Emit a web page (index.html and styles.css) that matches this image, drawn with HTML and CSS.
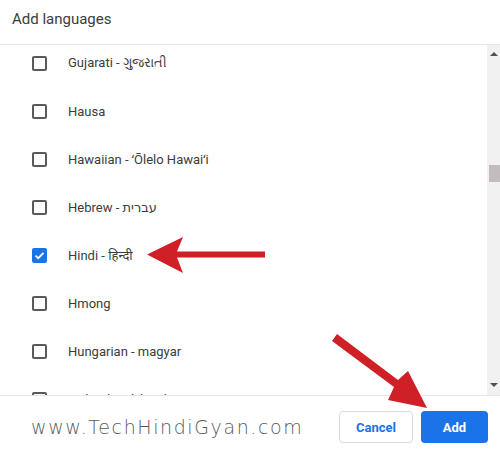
FILE: index.html
```html
<!DOCTYPE html>
<html>
<head>
<meta charset="utf-8">
<link rel="stylesheet" href="styles.css">
</head>
<body>
<div class="dialog">
  <div class="header">Add languages</div>
  <div class="body">
    <div class="list">
      <div class="rows">
        <div class="row"><span class="box"></span><span class="label">Gujarati - ગુજરાતી</span></div>
        <div class="row"><span class="box"></span><span class="label">Hausa</span></div>
        <div class="row"><span class="box"></span><span class="label">Hawaiian - ʻŌlelo Hawaiʻi</span></div>
        <div class="row"><span class="box"></span><span class="label">Hebrew - עברית</span></div>
        <div class="row"><span class="box checked"><svg viewBox="0 0 15 15" width="15" height="15"><path d="M3.5 7.6 L6.2 10.2 L11.5 4.9" fill="none" stroke="#fff" stroke-width="1.8"/></svg></span><span class="label">Hindi - हिन्दी</span></div>
        <div class="row"><span class="box"></span><span class="label">Hmong</span></div>
        <div class="row"><span class="box"></span><span class="label">Hungarian - magyar</span></div>
        <div class="row"><span class="box"></span><span class="label">Icelandic - íslenska</span></div>
      </div>
    </div>
    <div class="scrollbar">
      <div class="arrow up"></div>
      <div class="track"><div class="thumb"></div></div>
      <div class="arrow down"></div>
    </div>
  </div>
  <div class="footer">
    <div class="watermark">www.TechHindiGyan.com</div>
    <div class="buttons">
      <button class="btn cancel">Cancel</button>
      <button class="btn add">Add</button>
    </div>
  </div>
  <svg class="arrows" width="500" height="457" viewBox="0 0 500 457">
    <polygon fill="#cf1f27" points="147,254.5 183,237 177,251.5 265,251.5 265,257.5 177,257.5 183,273"/>
    <polygon fill="#cf1f27" points="337,334 398,380 408,371 427,408 388,400 394,387 332,341"/>
  </svg>
</div>
</body>
</html>
```
FILE: styles.css
```css
html, body {
  margin: 0;
  padding: 0;
  background: #fff;
}
.dialog {
  position: relative;
  width: 500px;
  height: 457px;
  display: flex;
  flex-direction: column;
  font-family: Roboto, "Noto Sans", "DejaVu Sans", sans-serif;
  overflow: hidden;
}
.header {
  height: 45px;
  box-sizing: border-box;
  padding: 10px 0 0 12px;
  font-size: 15px;
  color: #3c3c3c;
  border-bottom: 1px solid #e6e6e6;
}
.body {
  height: 350px;
  display: flex;
}
.list {
  flex: 1;
  overflow: hidden;
}
.rows {
  margin-top: -6px;
}
.row {
  height: 48px;
  display: flex;
  align-items: center;
  padding-left: 32px;
}
.box {
  width: 15px;
  height: 15px;
  box-sizing: border-box;
  border: 2px solid #5a5a5a;
  border-radius: 2px;
  display: flex;
  align-items: center;
  justify-content: center;
}
.box.checked {
  background: #1a73e8;
  border-color: #1a73e8;
}
.box.checked svg {
  flex: none;
}
.label {
  margin-left: 21px;
  font-size: 13px;
  color: #3c3c3c;
}
.scrollbar {
  width: 13px;
  background: #f1f1f1;
  display: flex;
  flex-direction: column;
  align-items: center;
}
.arrow {
  width: 0;
  height: 0;
  border-left: 4px solid transparent;
  border-right: 4px solid transparent;
}
.arrow.up {
  margin-top: 7px;
  border-bottom: 4px solid #505050;
}
.arrow.down {
  margin-bottom: 8px;
  border-top: 4px solid #505050;
}
.track {
  flex: 1;
  width: 100%;
  position: relative;
}
.thumb {
  margin-top: 109px;
  margin-left: 2px;
  height: 17px;
  width: 11px;
  background: #c2bbbf;
}
.footer {
  flex: 1;
  border-top: 1px solid #e6e6e6;
  display: flex;
  align-items: center;
  justify-content: space-between;
  padding: 0 12px 0 31px;
}
.watermark {
  font-family: "DejaVu Sans", sans-serif;
  font-weight: 200;
  font-size: 19px;
  letter-spacing: 1.6px;
  color: #5a5a5a;
  margin-top: 1px;
}
.buttons {
  display: flex;
  gap: 8px;
  margin-top: 1px;
}
.btn {
  height: 32px;
  border-radius: 4px;
  font-family: Roboto, "Noto Sans", sans-serif;
  font-weight: 700;
  font-size: 13px;
  padding: 0;
  cursor: pointer;
}
.cancel {
  width: 74px;
  background: #fff;
  color: #1a73e8;
  border: 1px solid #dadce0;
}
.add {
  width: 67px;
  background: #1a73e8;
  color: #fff;
  border: none;
}
.arrows {
  position: absolute;
  left: 0;
  top: 0;
  pointer-events: none;
}
```
